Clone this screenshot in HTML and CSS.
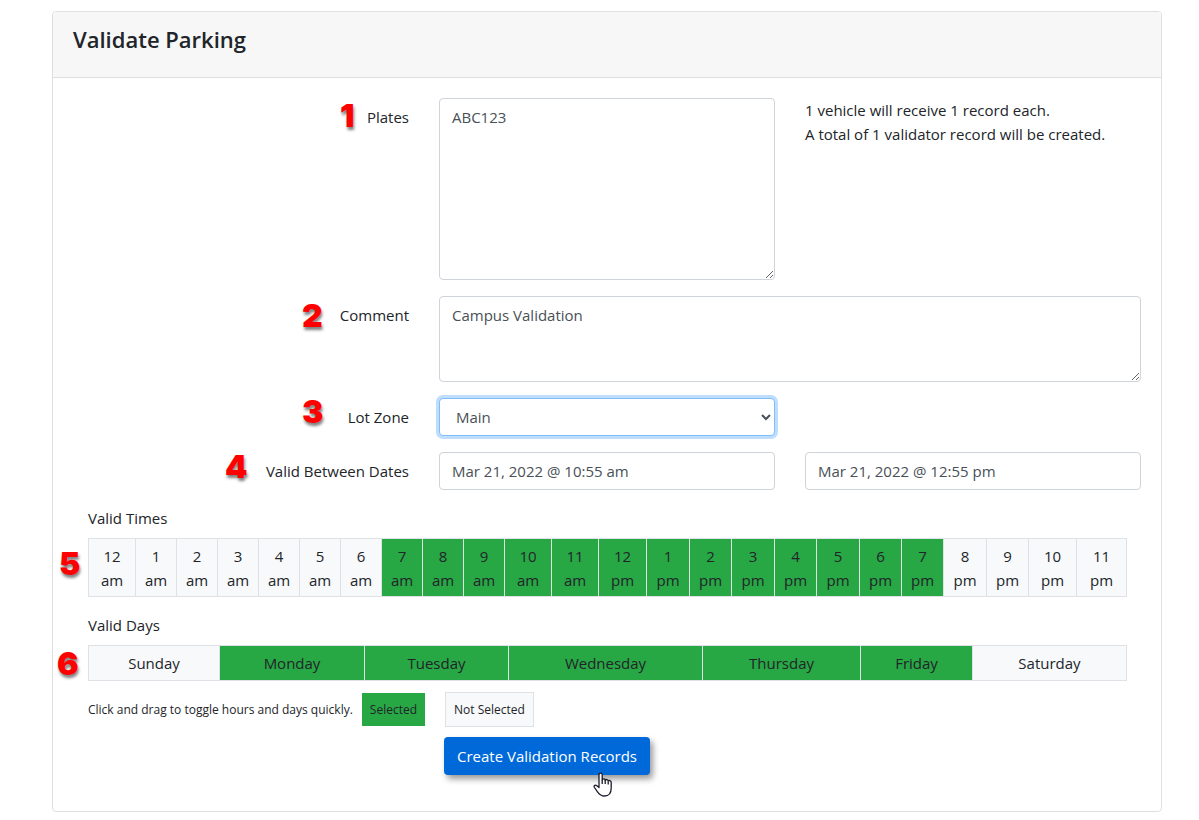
FILE: index.html
```html
<!DOCTYPE html>
<html lang="en">
<head>
<meta charset="utf-8">
<title>Validate Parking</title>
<link rel="stylesheet" href="styles.css">
</head>
<body>
<main class="card">
  <header class="card-header"><h1>Validate Parking</h1></header>
  <form class="card-body">
    <div class="row">
      <span class="step step-1">1</span>
      <label for="plates">Plates</label>
      <textarea id="plates" class="control plates">ABC123</textarea>
      <p class="summary">1 vehicle will receive 1 record each.<br>A total of 1 validator record will be created.</p>
    </div>
    <div class="row">
      <span class="step step-2">2</span>
      <label for="comment">Comment</label>
      <textarea id="comment" class="control comment">Campus Validation</textarea>
    </div>
    <div class="row">
      <span class="step step-3">3</span>
      <label for="zone">Lot Zone</label>
      <select id="zone" class="control zone"><option>Main</option></select>
    </div>
    <div class="row">
      <span class="step step-4">4</span>
      <label for="from">Valid Between Dates</label>
      <input id="from" class="control" type="text" value="Mar 21, 2022 @ 10:55 am">
      <input class="control" type="text" aria-label="Valid until" value="Mar 21, 2022 @ 12:55 pm">
    </div>

    <section class="schedule">
      <h2>Valid Times</h2>
      <span class="step step-5">5</span>
      <table class="slots hours">
        <colgroup>
          <col class="w-47"><col class="w-41" span="9"><col class="w-47" span="2">
          <col class="w-48"><col class="w-43"><col class="w-42"><col class="w-43"><col class="w-42"><col class="w-43"><col class="w-42" span="2"><col class="w-43"><col class="w-42"><col class="w-48"><col class="w-50">
        </colgroup>
        <tbody><tr>
          <td>12<br>am</td><td>1<br>am</td><td>2<br>am</td><td>3<br>am</td><td>4<br>am</td><td>5<br>am</td><td>6<br>am</td>
          <td class="on">7<br>am</td><td class="on">8<br>am</td><td class="on">9<br>am</td><td class="on">10<br>am</td><td class="on">11<br>am</td>
          <td class="on">12<br>pm</td><td class="on">1<br>pm</td><td class="on">2<br>pm</td><td class="on">3<br>pm</td><td class="on">4<br>pm</td><td class="on">5<br>pm</td><td class="on">6<br>pm</td><td class="on">7<br>pm</td>
          <td>8<br>pm</td><td>9<br>pm</td><td>10<br>pm</td><td>11<br>pm</td>
        </tr></tbody>
      </table>
    </section>

    <section class="schedule">
      <h2>Valid Days</h2>
      <span class="step step-6">6</span>
      <table class="slots">
        <colgroup><col class="w-sun"><col class="w-mon"><col class="w-tue"><col class="w-wed"><col class="w-thu"><col class="w-fri"><col class="w-sat"></colgroup>
        <tbody><tr>
          <td>Sunday</td><td class="on">Monday</td><td class="on">Tuesday</td><td class="on">Wednesday</td><td class="on">Thursday</td><td class="on">Friday</td><td>Saturday</td>
        </tr></tbody>
      </table>
    </section>

    <div class="legend">
      <span>Click and drag to toggle hours and days quickly.</span>
      <span class="key key-on">Selected</span>
      <span class="key key-off">Not Selected</span>
    </div>

    <div class="row actions">
      <button type="button" class="submit">Create Validation Records
        <svg class="pointer" width="20" height="26" viewBox="0 0 20 26" aria-hidden="true"><path d="M6 15.500V2.800C6 .6 9.200 .6 9.200 2.800V8C9.600 6.500 12.200 6.600 12.200 8.400C12.800 7 15.200 7.300 15.200 9.200C16 8 18.200 8.400 18.200 10.500V16C18.200 21 15.800 24 11.500 24C8 24 6.500 22.600 4.500 19.800L1.500 15.500C.4 13.800 2 12.600 3.600 13.600Z" fill="#fff" stroke="#1b1b2b" stroke-width="1.300" stroke-linejoin="round"/><path d="M9.200 8V12M12.200 8.500V12M15.200 9.500V12.500" fill="none" stroke="#1b1b2b" stroke-width="1.300"/></svg>
      </button>
    </div>
  </form>
</main>
</body>
</html>
```

FILE: styles.css
```css
* { box-sizing: border-box; }

body {
  margin: 11px 37px 8px 52px;
  background: #fff;
  color: #212529;
  font: 15px/24px "Open Sans", "Noto Sans", sans-serif;
}

.card {
  border: 1px solid #dfdfdf;
  border-radius: 4px;
}

.card-header {
  padding: 13px 20px 23px;
  background: #f7f7f7;
  border-bottom: 1px solid #dfdfdf;
  border-radius: 3px 3px 0 0;
}

h1 {
  margin: 0;
  font-size: 22px;
  line-height: 29px;
  font-weight: 600;
}

.card-body { padding: 20px 20px 36px; }

.row {
  position: relative;
  display: grid;
  grid-template-columns: repeat(3, minmax(0, 1fr));
  column-gap: 30px;
  margin-bottom: 16px;
}

.row label {
  padding-top: 7px;
  text-align: right;
}

.control {
  display: block;
  width: 100%;
  height: 38px;
  margin: 0;
  padding: 6px 12px;
  border: 1px solid #ced4da;
  border-radius: 4px;
  background: #fff;
  color: #495057;
  font: inherit;
}

textarea.control { resize: vertical; }
.plates.control { height: 182px; }
.comment.control { height: 86px; grid-column: span 2; }

.control.zone {
  border-color: #80bdff;
  box-shadow: 0 0 0 3px #bfdeff;
  outline: none;
}

.summary { margin: 0; }

.step {
  position: absolute;
  color: #f00;
  font: 900 32px/24px Inter, sans-serif;
  text-shadow: 1px 3px 3px rgba(0, 0, 0, .5);
}

.step-1 { top: 6px; left: 267px; }
.step-2 { top: 8px; left: 229px; }
.step-3 { top: 2px; left: 229px; }
.step-4 { top: 3px; left: 152px; }
.step-5 { top: 46px; left: -29px; }
.step-6 { top: 39px; left: -31px; }

.schedule {
  position: relative;
  margin: 0 15px 16px;
}

h2 {
  margin: 0 0 8px;
  font-size: 15px;
  line-height: 24px;
  font-weight: 400;
}

.slots {
  width: 100%;
  table-layout: fixed;
  border-collapse: collapse;
}

.slots td {
  padding: 5px 0;
  border: 1px solid #dee2e6;
  background: #f8f9fa;
  text-align: center;
}

.hours td { padding-bottom: 4px; }

.slots .on, .key-on { background: #28a745; }

.w-41 { width: 41px; }
.w-42 { width: 42px; }
.w-43 { width: 43px; }
.w-47 { width: 47px; }
.w-48 { width: 48px; }
.w-50 { width: 50px; }
.w-sun { width: 131px; }
.w-mon { width: 145px; }
.w-tue { width: 144px; }
.w-wed { width: 194px; }
.w-thu { width: 158px; }
.w-fri { width: 112px; }
.w-sat { width: 154px; }

.legend {
  display: flex;
  align-items: center;
  margin: -5px 15px 10px;
  font-size: 12px;
}

.key { padding: 5px 8px 4px; }
.key-on { margin: 0 20px 0 9px; }
.key-off {
  border: 1px solid #dee2e6;
  background: #f8f9fa;
}

.actions { margin-bottom: 0; }

.submit {
  position: relative;
  grid-column: 2;
  justify-self: start;
  margin-left: 5px;
  padding: 7px 13px;
  border: 0;
  border-radius: 4px;
  background: #0069d9;
  box-shadow: 3px 4px 6px rgba(0, 0, 0, .4);
  color: #fff;
  font: inherit;
  white-space: nowrap;
}

.pointer {
  position: absolute;
  top: 35px;
  left: 149px;
}
```
